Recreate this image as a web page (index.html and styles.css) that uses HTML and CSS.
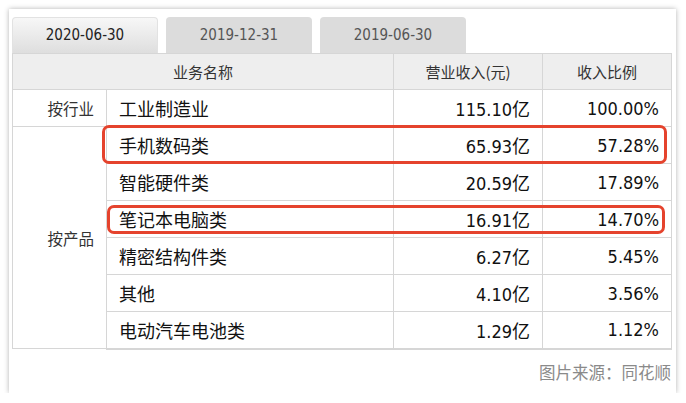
FILE: index.html
```html
<!DOCTYPE html>
<html lang="zh">
<head>
<meta charset="utf-8">
<link rel="stylesheet" href="styles.css">
</head>
<body>
<div class="page">
  <div class="card">
    <div class="tabs">
      <div class="tab active">2020-06-30</div>
      <div class="tab">2019-12-31</div>
      <div class="tab">2019-06-30</div>
    </div>
    <div class="table-wrap">
      <table class="data">
        <colgroup>
          <col class="c1"><col class="c2"><col class="c3"><col class="c4">
        </colgroup>
        <thead>
          <tr>
            <th colspan="2">业务名称</th>
            <th>营业收入(元)</th>
            <th>收入比例</th>
          </tr>
        </thead>
        <tbody>
          <tr>
            <td class="cat">按行业</td>
            <td class="name">工业制造业</td>
            <td class="num">115.10亿</td>
            <td class="num">100.00%</td>
          </tr>
          <tr>
            <td class="cat" rowspan="6">按产品</td>
            <td class="name">手机数码类</td>
            <td class="num">65.93亿</td>
            <td class="num">57.28%</td>
          </tr>
          <tr>
            <td class="name">智能硬件类</td>
            <td class="num">20.59亿</td>
            <td class="num">17.89%</td>
          </tr>
          <tr>
            <td class="name">笔记本电脑类</td>
            <td class="num">16.91亿</td>
            <td class="num">14.70%</td>
          </tr>
          <tr>
            <td class="name">精密结构件类</td>
            <td class="num">6.27亿</td>
            <td class="num">5.45%</td>
          </tr>
          <tr>
            <td class="name">其他</td>
            <td class="num">4.10亿</td>
            <td class="num">3.56%</td>
          </tr>
          <tr>
            <td class="name">电动汽车电池类</td>
            <td class="num">1.29亿</td>
            <td class="num">1.12%</td>
          </tr>
        </tbody>
      </table>
      <div class="mark mark-1"></div>
      <div class="mark mark-2"></div>
    </div>
    <div class="source">图片来源：同花顺</div>
  </div>
</div>
</body>
</html>
```

FILE: styles.css
```css
html, body {
  margin: 0;
  padding: 0;
  background: #ffffff;
}
.page {
  padding: 9px 0 0 9px;
}
.card {
  width: 667px;
  height: 384px;
  box-sizing: border-box;
  background: #ffffff;
  box-shadow: 0 0 5px rgba(0, 0, 0, 0.3);
  padding: 8px 5px 0 3px;
  font-family: "Noto Sans CJK SC", sans-serif;
  color: #222;
}
.tabs {
  display: flex;
  gap: 8px;
  height: 36px;
}
.tab {
  width: 146px;
  box-sizing: border-box;
  border-radius: 4px 4px 0 0;
  background: #dcdcdc;
  color: #555;
  font-family: "DejaVu Sans Condensed", "Open Sans", sans-serif;
  font-size: 15px;
  line-height: 36px;
  text-align: center;
}
.tab.active {
  background: linear-gradient(#f7f7f7, #dedede);
  border: 1px solid #e2e2e2;
  border-bottom: none;
  line-height: 35px;
  color: #222;
}
.table-wrap {
  position: relative;
  width: 659px;
}
.data {
  width: 659px;
  border-collapse: collapse;
  table-layout: fixed;
}
.c1 { width: 94px; }
.c2 { width: 287px; }
.c3 { width: 149px; }
.c4 { width: 129px; }
.data th {
  height: 35px;
  padding: 0;
  background: #eeeeee;
  border: 1px solid #d6d6d6;
  font-weight: normal;
  font-size: 15px;
  color: #333;
  text-align: center;
}
.data td {
  height: 37px;
  padding: 0 12px;
  border: 1px solid #d6d6d6;
  box-sizing: border-box;
}
.data tbody tr:last-child td {
  border-bottom: 2px solid #d6d6d6;
}
.cat {
  text-align: right;
  font-size: 15.5px;
  color: #333;
}
.name {
  font-size: 18px;
  color: #111;
}
.num {
  text-align: right;
  font-family: "DejaVu Sans Condensed", "Open Sans", "Noto Sans CJK SC", sans-serif;
  font-size: 18px;
  color: #111;
}
.mark {
  position: absolute;
  border: 3px solid #e5432d;
  border-radius: 7px;
  box-sizing: border-box;
}
.mark-1 {
  left: 90px;
  top: 72px;
  width: 565px;
  height: 39px;
}
.mark-2 {
  left: 95px;
  top: 152px;
  width: 558px;
  height: 29px;
}
.source {
  margin-top: 11px;
  width: 659px;
  text-align: right;
  font-size: 16.5px;
  line-height: 22px;
  color: #8a8a8a;
}
```
